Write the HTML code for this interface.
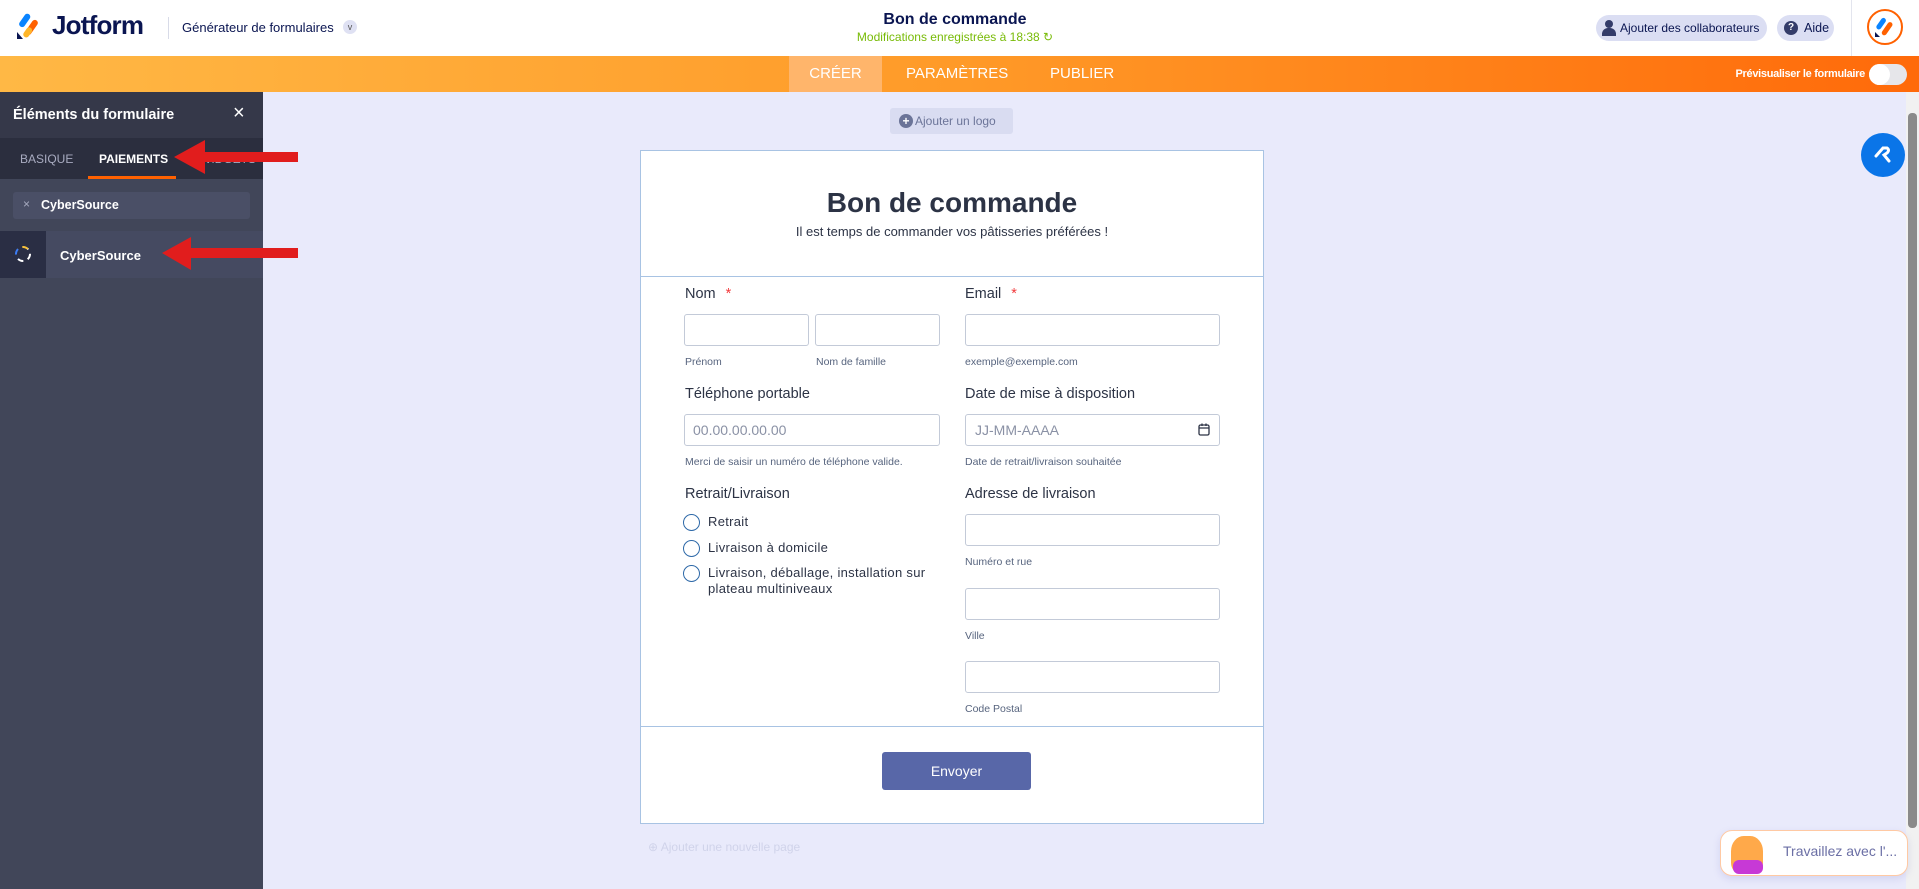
<!DOCTYPE html>
<html><head><meta charset="utf-8"><style>
*{box-sizing:border-box;margin:0;padding:0}
body{width:1919px;height:889px;overflow:hidden;font-family:"Liberation Sans",sans-serif;background:#e9eafb;position:relative}
.a{position:absolute}
.hdr{left:0;top:0;width:1919px;height:56px;background:#fff}
.bar{left:0;top:56px;width:1919px;height:36px;background:linear-gradient(90deg,#ffb845,#ff9a28 50%,#ff6a0a)}
.nav{top:56px;height:36px;line-height:36px;color:#fff;font-size:15px}
.side{left:0;top:92px;width:263px;height:797px;background:#414659}
.lbl{font-size:14.5px;color:#2c3345}
.sub{font-size:10.5px;color:#57647e}
.inp{background:#fff;border:1px solid #c3cad8;border-radius:3px;height:32px}
.rad{width:17px;height:17px;border:1.5px solid #2e69a8;border-radius:50%}
.rt{font-size:13px;color:#2c3345;letter-spacing:.3px}
</style></head><body>
<div class="a hdr"></div>
<svg class="a" style="left:16px;top:12px" width="26" height="28" viewBox="0 0 26 28">
<rect x="6" y="1" width="6" height="15" rx="3" transform="rotate(35 9 8)" fill="#0a84ff"/>
<rect x="13" y="7" width="6" height="17" rx="3" transform="rotate(35 16 15)" fill="#ff6100"/>
<rect x="9" y="15" width="6" height="11" rx="3" transform="rotate(35 12 20)" fill="#ffb629"/>
<path d="M1 20 L1 27 L7 27Z" fill="#0a1551"/>
</svg>
<div class="a" style="left:52px;top:10px;font-size:26px;font-weight:bold;color:#0a1551;letter-spacing:-.8px">Jotform</div>
<div class="a" style="left:168px;top:17px;width:1px;height:22px;background:#d8dbe8"></div>
<div class="a" style="left:182px;top:20px;font-size:13px;color:#0a1551">Générateur de formulaires</div>
<div class="a" style="left:343px;top:20px;width:14px;height:14px;border-radius:50%;background:#dfe1f3;font-size:9px;text-align:center;line-height:14px;color:#555">v</div>
<div class="a" style="left:755px;top:11px;width:400px;text-align:center;font-size:16px;font-weight:bold;color:#0a1551">Bon de commande</div>
<div class="a" style="left:755px;top:30px;width:400px;text-align:center;font-size:12px;color:#78bb07">Modifications enregistrées à 18:38 ↻</div>
<div class="a" style="left:1596px;top:15px;width:171px;height:26px;border-radius:13px;background:#dbdef3;font-size:12px;color:#0a1551;line-height:26px;padding-left:24px;white-space:nowrap">Ajouter des collaborateurs</div>
<div class="a" style="left:1605px;top:20px;width:8px;height:8px;border-radius:50%;background:#343c6a"></div>
<div class="a" style="left:1602px;top:28px;width:14px;height:8px;border-radius:6px 6px 0 0;background:#343c6a"></div>
<div class="a" style="left:1777px;top:15px;width:57px;height:26px;border-radius:13px;background:#dbdef3;font-size:12.5px;color:#0a1551;line-height:26px;padding-left:27px">Aide</div>
<div class="a" style="left:1784px;top:21px;width:14px;height:14px;border-radius:50%;background:#343c6a;color:#fff;font-size:10px;text-align:center;line-height:14px;font-weight:bold">?</div>
<div class="a" style="left:1851px;top:0;width:1px;height:56px;background:#e3e5ee"></div>
<div class="a" style="left:1867px;top:9px;width:36px;height:36px;border-radius:50%;border:2px solid #ff6100;background:#fff"></div>
<svg class="a" style="left:1873px;top:15px" width="24" height="24" viewBox="0 0 24 24"><rect x="6" y="2" width="5" height="13" rx="2.5" transform="rotate(35 8 8)" fill="#0a84ff"/><rect x="12" y="6" width="5" height="15" rx="2.5" transform="rotate(35 14 13)" fill="#ff6100"/><path d="M2 17 L2 22 L7 22Z" fill="#0a1551"/></svg>

<div class="a bar"></div>
<div class="a" style="left:789px;top:56px;width:93px;height:36px;background:#ffb56b"></div>
<div class="a nav" style="left:789px;width:93px;text-align:center">CRÉER</div>
<div class="a nav" style="left:906px">PARAMÈTRES</div>
<div class="a nav" style="left:1050px">PUBLIER</div>
<div class="a" style="right:54px;top:68px;font-size:11px;color:#fff;font-weight:bold;letter-spacing:-.3px;white-space:nowrap">Prévisualiser le formulaire</div>
<div class="a" style="left:1869px;top:64px;width:38px;height:21px;border-radius:11px;background:#e6e6ea"></div>
<div class="a" style="left:1869px;top:64px;width:21px;height:21px;border-radius:50%;background:#fff"></div>

<div class="a side"></div>
<div class="a" style="left:0;top:92px;width:263px;height:46px;background:#353849"></div>
<div class="a" style="left:13px;top:107px;font-size:14.5px;font-weight:bold;color:#fff">Éléments du formulaire</div>
<div class="a" style="left:233px;top:102px;font-size:20px;color:#fff">×</div>
<div class="a" style="left:0;top:138px;width:263px;height:41px;background:#2b2e3e"></div>
<div class="a" style="left:20px;top:152px;font-size:12px;color:#a8abc0">BASIQUE</div>
<div class="a" style="left:99px;top:152px;font-size:12px;color:#fff;font-weight:bold">PAIEMENTS</div>
<div class="a" style="left:88px;top:176px;width:88px;height:3px;background:#ff6100"></div>
<div class="a" style="left:200px;top:152px;font-size:12px;color:#a8abc0">WIDGETS</div>
<div class="a" style="left:13px;top:192px;width:237px;height:27px;border-radius:3px;background:#4a4f66"></div>
<div class="a" style="left:23px;top:197px;font-size:12px;color:#a8abc0">×</div>
<div class="a" style="left:41px;top:198px;font-size:12.5px;color:#fff;font-weight:bold">CyberSource</div>
<div class="a" style="left:0;top:231px;width:263px;height:47px;background:#454a61"></div>
<div class="a" style="left:0;top:231px;width:46px;height:47px;background:#2a2e44"></div>
<div class="a" style="left:15px;top:246px;width:16px;height:16px;border-radius:50%;border:2px dashed #fff;border-left-color:#3b7df7;border-top-color:#f7c13b"></div>
<div class="a" style="left:60px;top:248px;font-size:13px;color:#fff;font-weight:bold">CyberSource</div>
<svg class="a" style="left:160px;top:140px" width="140" height="135"><path d="M14 17 L45 0 L45 12 L138 12 L138 22 L45 22 L45 34Z" fill="#e11d1d"/><path d="M2 113 L31 97 L31 108 L138 108 L138 118 L31 118 L31 130Z" fill="#e11d1d"/></svg>

<div class="a" style="left:890px;top:108px;width:123px;height:26px;border-radius:3px;background:#d9dcf1;font-size:12px;color:#6b7498;line-height:26px;padding-left:25px">Ajouter un logo</div>
<div class="a" style="left:899px;top:114px;width:14px;height:14px;border-radius:50%;background:#6b7498;color:#fff;font-size:12px;text-align:center;line-height:14px;font-weight:bold">+</div>

<div class="a" style="left:640px;top:150px;width:624px;height:674px;background:#fff;border:1px solid #a8c3e3"></div>
<div class="a" style="left:641px;top:276px;width:622px;height:1px;background:#a8c3e3"></div>
<div class="a" style="left:641px;top:187px;width:622px;text-align:center;font-size:28px;font-weight:bold;color:#2c3345">Bon de commande</div>
<div class="a" style="left:641px;top:224px;width:622px;text-align:center;font-size:13px;color:#2c3345">Il est temps de commander vos pâtisseries préférées !</div>

<div class="a lbl" style="left:685px;top:286px">Nom <span style="color:#f23a3c;margin-left:6px">*</span></div>
<div class="a inp" style="left:684px;top:314px;width:125px"></div>
<div class="a inp" style="left:815px;top:314px;width:125px"></div>
<div class="a sub" style="left:685px;top:356px">Prénom</div>
<div class="a sub" style="left:816px;top:356px">Nom de famille</div>
<div class="a lbl" style="left:965px;top:286px">Email <span style="color:#f23a3c;margin-left:6px">*</span></div>
<div class="a inp" style="left:965px;top:314px;width:255px"></div>
<div class="a sub" style="left:965px;top:356px">exemple@exemple.com</div>

<div class="a lbl" style="left:685px;top:386px">Téléphone portable</div>
<div class="a inp" style="left:684px;top:414px;width:256px;font-size:14px;color:#8a91a5;line-height:30px;padding-left:8px">00.00.00.00.00</div>
<div class="a sub" style="left:685px;top:456px">Merci de saisir un numéro de téléphone valide.</div>
<div class="a lbl" style="left:965px;top:386px">Date de mise à disposition</div>
<div class="a inp" style="left:965px;top:414px;width:255px;font-size:14px;color:#8a91a5;line-height:30px;padding-left:9px">JJ-MM-AAAA</div>
<svg class="a" style="left:1198px;top:423px" width="12" height="13" viewBox="0 0 12 13"><rect x="1" y="2" width="10" height="10" rx="1.5" fill="none" stroke="#2c3345" stroke-width="1.3"/><path d="M1 5H11M4 0.5V3M8 0.5V3" stroke="#2c3345" stroke-width="1.3"/></svg>
<div class="a sub" style="left:965px;top:456px">Date de retrait/livraison souhaitée</div>

<div class="a lbl" style="left:685px;top:486px">Retrait/Livraison</div>
<div class="a rad" style="left:683px;top:514px"></div><div class="a rt" style="left:708px;top:514px">Retrait</div>
<div class="a rad" style="left:683px;top:540px"></div><div class="a rt" style="left:708px;top:540px">Livraison à domicile</div>
<div class="a rad" style="left:683px;top:565px"></div><div class="a rt" style="left:708px;top:565px;line-height:16px">Livraison, déballage, installation sur<br>plateau multiniveaux</div>

<div class="a lbl" style="left:965px;top:486px">Adresse de livraison</div>
<div class="a inp" style="left:965px;top:514px;width:255px"></div>
<div class="a sub" style="left:965px;top:556px">Numéro et rue</div>
<div class="a inp" style="left:965px;top:588px;width:255px"></div>
<div class="a sub" style="left:965px;top:630px">Ville</div>
<div class="a inp" style="left:965px;top:661px;width:255px"></div>
<div class="a sub" style="left:965px;top:703px">Code Postal</div>

<div class="a" style="left:641px;top:726px;width:622px;height:1px;background:#a8c3e3"></div>
<div class="a" style="left:882px;top:752px;width:149px;height:38px;border-radius:3px;background:#5867a8;color:#fff;font-size:14px;text-align:center;line-height:38px">Envoyer</div>
<div class="a" style="left:648px;top:840px;font-size:12px;color:#d0d3ea">⊕ Ajouter une nouvelle page</div>

<div class="a" style="left:1861px;top:133px;width:44px;height:44px;border-radius:50%;background:#0a75e8"></div>
<svg class="a" style="left:1872px;top:144px" width="22" height="22" viewBox="0 0 22 22"><path d="M4 12 L11 4 L15 4 Q18 6 15 9 L12 11 L17 17" fill="none" stroke="#fff" stroke-width="3" stroke-linecap="round"/></svg>
<div class="a" style="left:1906px;top:92px;width:13px;height:797px;background:#f1f1f1"></div>
<div class="a" style="left:1908px;top:113px;width:9px;height:715px;border-radius:4px;background:#8a8a8a"></div>
<div class="a" style="left:1720px;top:830px;width:188px;height:46px;border-radius:12px;background:#fff;border:1px solid #ffc9a3;box-shadow:0 3px 8px rgba(120,120,200,.2)"></div>
<div class="a" style="left:1731px;top:836px;width:32px;height:38px;border-radius:40% 40% 30% 30%;background:#ffa94a"></div>
<div class="a" style="left:1733px;top:860px;width:30px;height:14px;border-radius:6px;background:#c739d6"></div>
<div class="a" style="left:1783px;top:843px;font-size:14px;color:#6b6fa5">Travaillez avec l'...</div>
</body></html>
